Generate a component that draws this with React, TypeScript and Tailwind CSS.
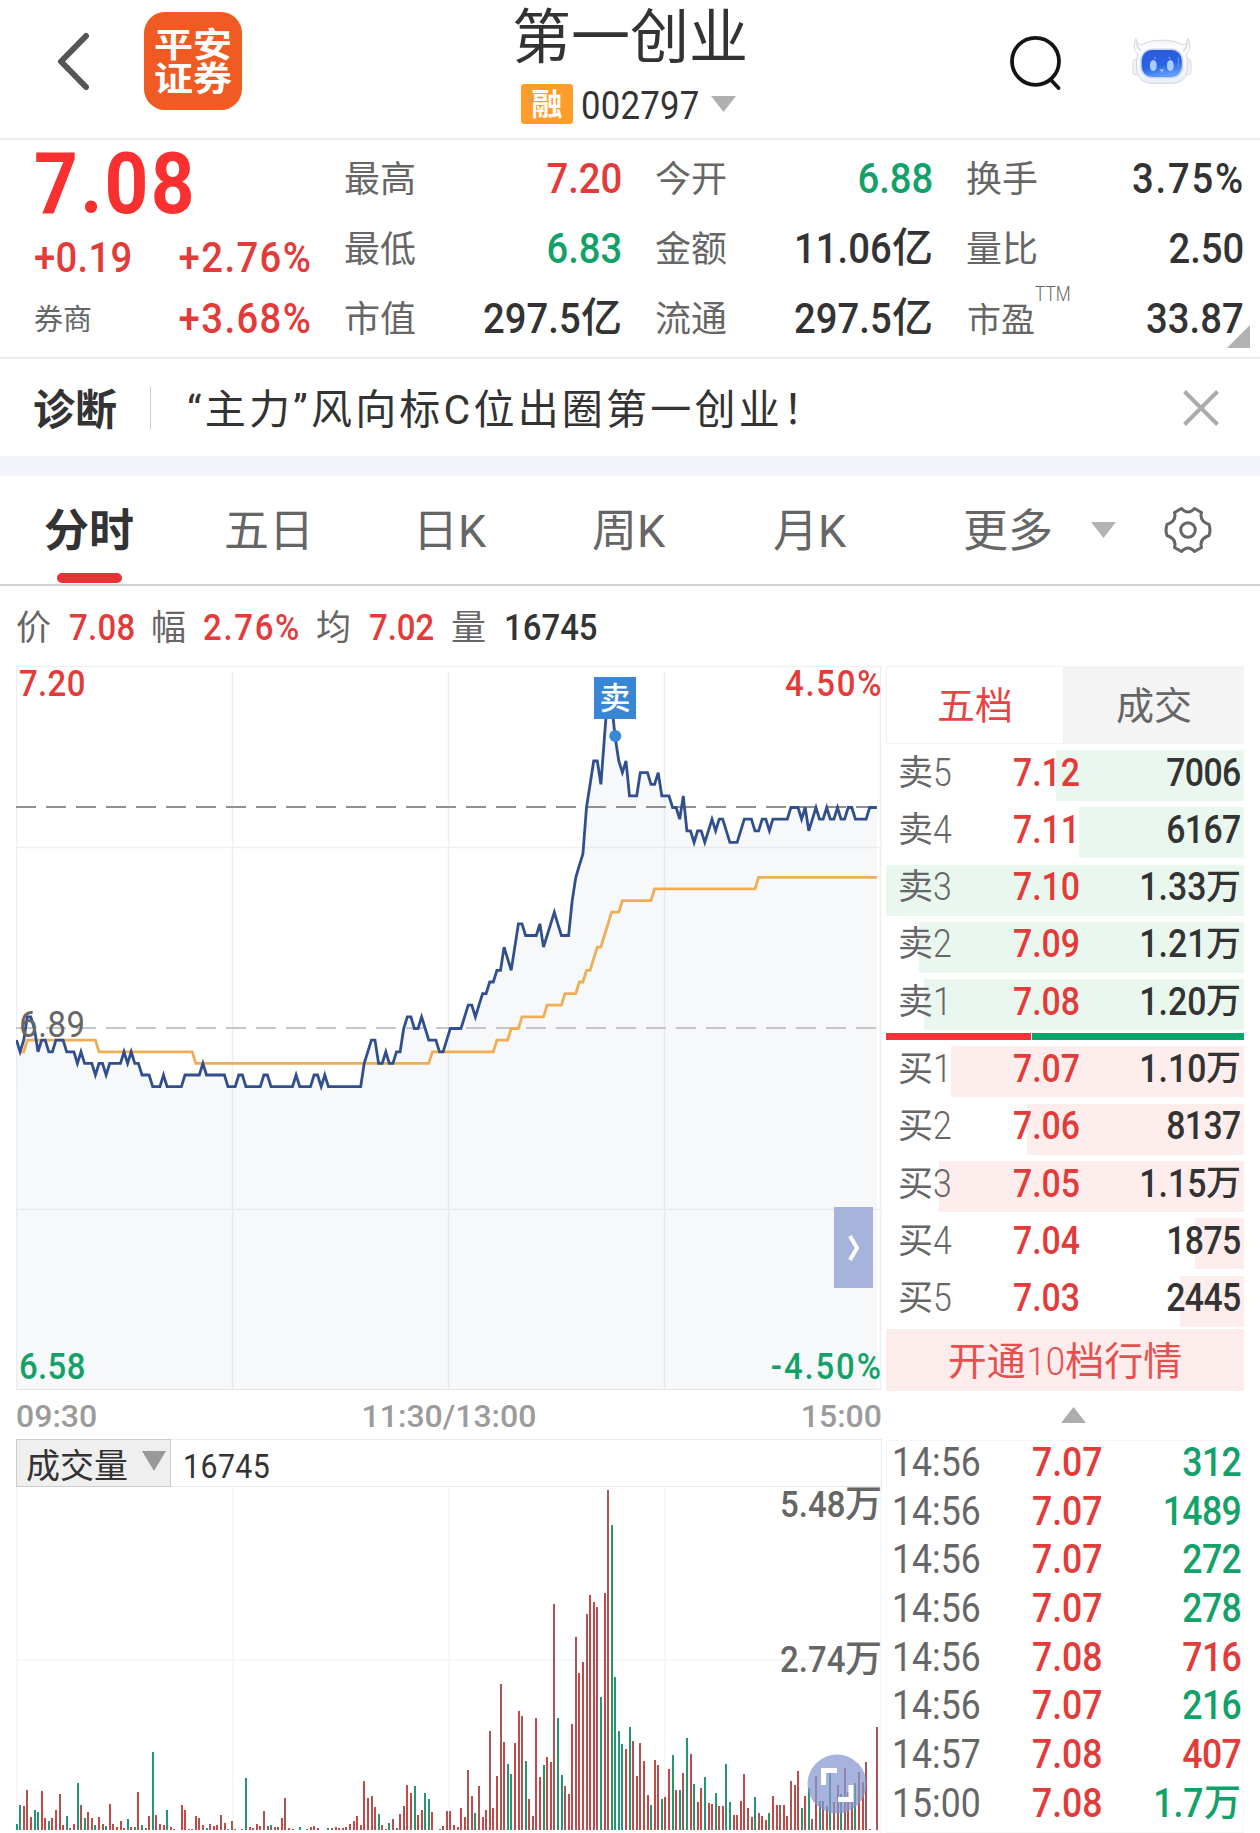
import type { ReactNode } from 'react';
import clsx from 'clsx';

const RED = 'text-[#e23b3a]';
const GREEN = 'text-[#12a168]';
const DARK = 'text-[#333333]';

// [minute of the session, price in cents]
const PRICE: [number, number][] = [
  [0, 688], [1, 687], [2, 688], [3, 690], [4, 690], [5, 689], [6, 687], [7, 688], [8, 688], [9, 687], [10, 687],
  [11, 688], [13, 688], [14, 687], [16, 687], [17, 686], [18, 687], [19, 686], [21, 686], [22, 685], [23, 686],
  [24, 686], [25, 685], [26, 686], [29, 686], [30, 687], [31, 686], [32, 687], [33, 686], [34, 686], [35, 685],
  [37, 685], [38, 684], [40, 684], [41, 685], [42, 684], [46, 684], [47, 685], [51, 685], [52, 686], [53, 685],
  [58, 685], [59, 684], [61, 684], [62, 685], [63, 685], [64, 684], [68, 684], [69, 685], [70, 685], [71, 684],
  [77, 684], [78, 685], [79, 684], [82, 684], [83, 685], [84, 685], [85, 684], [86, 685], [87, 684], [96, 684],
  [97, 686], [98, 687], [99, 688], [100, 688], [101, 686], [102, 686], [103, 687], [104, 686], [105, 686],
  [106, 687], [107, 687], [108, 689], [109, 690], [110, 690], [111, 689], [112, 689], [113, 690], [114, 689],
  [115, 688], [117, 688], [118, 687], [119, 687], [120, 688], [121, 689], [124, 689], [125, 690], [126, 691],
  [127, 691], [128, 690], [129, 691], [130, 692], [131, 692], [132, 693], [133, 693], [134, 694], [135, 694],
  [136, 696], [137, 695], [138, 694], [139, 696], [140, 698], [141, 698], [142, 697], [145, 697], [146, 698],
  [147, 696], [148, 697], [149, 698], [150, 699], [151, 698], [152, 697], [154, 697], [155, 700], [156, 702],
  [157, 703], [158, 704], [159, 708], [160, 710], [161, 712], [162, 712], [163, 710], [164, 714], [165, 718],
  [166, 717], [167, 714], [168, 712], [169, 711], [170, 712], [171, 709], [173, 709], [174, 711], [176, 711],
  [177, 710], [178, 710], [179, 711], [180, 709], [182, 709], [183, 708], [184, 708], [185, 707], [186, 709],
  [187, 706], [188, 706], [189, 705], [190, 706], [191, 706], [192, 705], [193, 706], [194, 707], [195, 706],
  [196, 707], [197, 707], [198, 706], [199, 705], [201, 705], [202, 706], [203, 707], [205, 707], [206, 706],
  [207, 706], [208, 707], [209, 707], [210, 706], [211, 707], [215, 707], [216, 708], [218, 708], [219, 707],
  [220, 708], [221, 706], [222, 707], [223, 708], [224, 707], [225, 707], [226, 708], [227, 707], [228, 707],
  [229, 708], [230, 707], [231, 707], [232, 708], [233, 708], [234, 707], [237, 707], [238, 708], [240, 708],
];

const AVERAGE: [number, number][] = [
  [1, 687], [2, 687], [3, 688], [22, 688], [23, 687], [49, 687], [50, 686], [115, 686], [116, 687], [133, 687],
  [134, 688], [137, 688], [138, 689], [140, 689], [141, 690], [147, 690], [148, 691], [152, 691], [153, 692],
  [156, 692], [157, 693], [158, 693], [159, 694], [160, 694], [161, 695], [162, 696], [163, 696], [164, 697],
  [165, 698], [166, 699], [168, 699], [169, 700], [177, 700], [178, 701], [206, 701], [207, 702], [240, 702],
];

// one bar per minute, negative = falling minute
const VOLUME = [
  -6, -25, 24, 40, 13, -20, -18, 39, 12, -9, 12, 20, 36, 5, -14, 2, 6, -47, 25, -12, 18, 12, -5, 13, 6, -4, 26, 6, 3, 9,
  2, -11, 3, -3, 38, -5, 2, 14, -78, 15, 6, 5, -20, 3, 1, 0, 25, 20, 1, 1, 14, 12, 5, -2, 6, 4, 5, 15, 7, -1,
  9, 1, 0, 1, -52, 3, 2, 6, 4, 19, 4, -5, 3, 3, 12, 32, 2, 1, 0, -3, 0, 1, 3, 4, 2, 0, 0, -2, 2, 3,
  2, 2, 3, 6, 9, 14, 5, 49, 32, 34, 23, -16, 5, 1, -7, 11, 2, 16, 24, 45, 37, -44, 15, 20, -37, -31, 18, 0, -1, 4,
  19, 19, 5, 3, 22, 13, 60, 34, -17, 44, 13, 20, 99, 22, 54, 146, 88, -66, -56, 87, 119, 114, -69, 31, 14, 112, 53, -65, 73, 68,
  226, -112, -55, 44, 36, 106, 193, 157, 168, 216, 235, 228, 223, -133, 237, 340, -305, -153, -99, -86, 81, -103, 89, 54, 87, 69, 35, -25, 70, 65,
  -31, 33, 61, -75, 40, -40, 57, -92, 76, -46, 28, 42, -53, 27, 26, -37, 24, 24, -66, -28, 15, 15, 29, 56, 22, 13, -33, 17, 14, 10,
  -17, 34, 25, 25, 25, 14, 49, 45, 59, -22, 34, -42, 11, 54, -29, 29, 24, -57, 28, 45, -36, 62, 38, 29, -47, 58, 48, 68, 1, 0, 103,
];

const STEP = 3.585;
const toPoints = (data: [number, number][]) =>
  data.map(([m, p]) => `${(0.5 + m * STEP).toFixed(1)},${(362.5 - (p - 689) * 11.63).toFixed(1)}`).join(' ');

const quoteColumns = [
  [
    { label: '最高', value: '7.20', color: RED },
    { label: '最低', value: '6.83', color: GREEN },
    { label: '市值', value: '297.5', unit: '亿', color: DARK },
  ],
  [
    { label: '今开', value: '6.88', color: GREEN },
    { label: '金额', value: '11.06', unit: '亿', color: DARK },
    { label: '流通', value: '297.5', unit: '亿', color: DARK },
  ],
  [
    { label: '换手', value: '3.75%', color: DARK },
    { label: '量比', value: '2.50', color: DARK },
    { label: '市盈', value: '33.87', color: DARK, ttm: true },
  ],
];

const sells = [
  { label: '卖', level: 5, price: '7.12', amount: '7006', bar: 188 },
  { label: '卖', level: 4, price: '7.11', amount: '6167', bar: 165 },
  { label: '卖', level: 3, price: '7.10', amount: '1.33', unit: '万', bar: 358 },
  { label: '卖', level: 2, price: '7.09', amount: '1.21', unit: '万', bar: 325 },
  { label: '卖', level: 1, price: '7.08', amount: '1.20', unit: '万', bar: 320 },
];

const buys = [
  { label: '买', level: 1, price: '7.07', amount: '1.10', unit: '万', bar: 293 },
  { label: '买', level: 2, price: '7.06', amount: '8137', bar: 217 },
  { label: '买', level: 3, price: '7.05', amount: '1.15', unit: '万', bar: 305 },
  { label: '买', level: 4, price: '7.04', amount: '1875', bar: 49 },
  { label: '买', level: 5, price: '7.03', amount: '2445', bar: 64 },
];

const ticks = [
  { time: '14:56', price: '7.07', amount: '312', color: GREEN },
  { time: '14:56', price: '7.07', amount: '1489', color: GREEN },
  { time: '14:56', price: '7.07', amount: '272', color: GREEN },
  { time: '14:56', price: '7.07', amount: '278', color: GREEN },
  { time: '14:56', price: '7.08', amount: '716', color: RED },
  { time: '14:56', price: '7.07', amount: '216', color: GREEN },
  { time: '14:57', price: '7.08', amount: '407', color: RED },
  { time: '15:00', price: '7.08', amount: '1.7', unit: '万', color: GREEN },
];

// Narrow figures
const Num = ({ children, className, right }: { children: ReactNode; className?: string; right?: boolean }) => (
  <span
    className={clsx(
      'inline-block scale-x-[0.89] whitespace-nowrap leading-none',
      right ? 'origin-right' : 'origin-left',
      className
    )}
  >
    {children}
  </span>
);

const Triangle = ({ className, up }: { className?: string; up?: boolean }) => (
  <svg viewBox="0 0 24 16" preserveAspectRatio="none" className={className} fill="currentColor">
    <path d={up ? 'M0 16 12 0l12 16z' : 'M0 0h24L12 16z'} />
  </svg>
);

const RobotIcon = () => (
  <svg width="60" height="50" viewBox="0 0 60 50" fill="none">
    <defs>
      <linearGradient id="face" x1="0" y1="0" x2="0.3" y2="1">
        <stop offset="0" stopColor="#2a5ad6" />
        <stop offset="0.65" stopColor="#2c62e6" />
        <stop offset="1" stopColor="#5f9bf6" />
      </linearGradient>
      <linearGradient id="shell" x1="0" y1="0" x2="0" y2="1">
        <stop offset="0" stopColor="#f1f2f5" />
        <stop offset="0.25" stopColor="#ffffff" />
        <stop offset="1" stopColor="#e9eff7" />
      </linearGradient>
    </defs>
    <rect x="1" y="22" width="7" height="16" rx="3" fill="#f4f1f3" stroke="#d6d4da" strokeWidth="0.800" />
    <rect x="52" y="22" width="7" height="16" rx="3" fill="#f4f1f3" stroke="#d6d4da" strokeWidth="0.800" />
    <path
      d="M4 1.500C4.500 5 6.500 8 10 7.500C15 4.500 22 3.200 30 3.200S45 4.500 50 7.500C53.500 8 55.500 5 56 1.500C59 7 58.500 13 54 17C55.500 21 55.800 26 55.300 33C54.500 41 49 46 41 46.300H19C11 46 5.500 41 4.700 33C4.200 26 4.500 21 6 17C1.500 13 1 7 4 1.500Z"
      fill="url(#shell)"
      stroke="#cfd2da"
      strokeWidth="0.900"
    />
    <path d="M5 5c0 4 1.500 7.500 4 9M55 5c0 4-1.500 7.500-4 9" stroke="#dcdee4" strokeWidth="2" />
    <rect x="9" y="12.300" width="41.500" height="28.300" rx="11" fill="url(#face)" stroke="#c3d6f7" strokeWidth="1.400" />
    <ellipse cx="21.300" cy="28.500" rx="3.400" ry="5.600" fill="#a9cdfb" />
    <ellipse cx="38.300" cy="28.500" rx="3.400" ry="5.600" fill="#a9cdfb" />
    <path d="M22 21h2M36.500 21h2M28.700 32.800h2.600L30 35z" stroke="#8fbcfa" strokeWidth="1.200" fill="#9cc6ff" />
    <path d="M46.500 20v10" stroke="#5e8df2" strokeWidth="1.200" />
  </svg>
);

const GearIcon = () => (
  <svg width="48" height="48" viewBox="0 0 48 48" fill="none" stroke="#666" strokeWidth="3" strokeLinejoin="round">
    <path d="M17.500 2.500Q24 9.500 30.500 2.500L37.500 6.500Q35 15 45 18.500Q47 24 45 29.500Q35 33 37.500 41.500L30.500 45.500Q24 38.500 17.500 45.500L10.500 41.500Q13 33 3 29.500Q1 24 3 18.500Q13 15 10.500 6.500Z" />
    <circle cx="24" cy="24" r="7.300" />
  </svg>
);

const Header = () => (
  <header className="flex h-[140px] shrink-0 border-b-2 border-[#ececec]">
    <div className="flex w-[515px] items-start pl-[55px]">
      <svg width="36" height="60" viewBox="0 0 36 60" className="mt-8" fill="none" stroke="#555" strokeWidth="6" strokeLinecap="round" strokeLinejoin="round">
        <path d="M31 4 6 29.500 31 55" />
      </svg>
      <div className="ml-[53px] mt-3 flex size-[98px] items-center justify-center rounded-[21px] bg-[#f05b24] font-bold text-white">
        <p className="mt-[3px] scale-y-[0.86] whitespace-pre text-[39px] leading-[40px]">{'平安\n证券'}</p>
      </div>
    </div>
    <div className="flex w-[232px] flex-col items-start">
      <h1 className="-ml-[3px] mt-2 whitespace-nowrap text-[59px] leading-none">第一创业</h1>
      <div className="ml-[6px] mt-[17px] flex h-10 items-center">
        <span className="flex h-10 w-[52px] items-center justify-center rounded-[3px] bg-[#ff9c2a] text-[31px] font-bold leading-none text-white">
          融
        </span>
        <Num className="ml-2 mt-[5px] w-[130px] text-[39px] tracking-[0.300px]">002797</Num>
        <Triangle className="-mt-px h-4 w-[25px] text-[#b0b0b0]" />
      </div>
    </div>
    <div className="flex flex-1 items-start justify-between pl-[262px] pr-[68px] pt-[34px]">
      <svg width="54" height="58" viewBox="0 0 54 58" fill="none" stroke="#141414" strokeWidth="3.800" strokeLinecap="round">
        <circle cx="26.500" cy="27.300" r="23.500" />
        <path d="m42 46 7.500 8" />
      </svg>
      <div className="mt-[3px]">
        <RobotIcon />
      </div>
    </div>
  </header>
);

const Quote = () => (
  <section className="relative flex h-[219px] shrink-0 border-b-2 border-[#ececec]">
    <div className="w-[345px] shrink-0 pl-[34px]">
      <div className="mt-[1px] flex h-[86px] items-center">
        <Num className="text-[86px] font-bold tracking-[2.500px] text-[#f8302f]">7.08</Num>
      </div>
      <div className={clsx('-mt-px flex h-[62px] w-[276px] items-center justify-between text-[43px] font-medium', RED)}>
        <Num className="tracking-[0.300px]">+0.19</Num>
        <Num right className="-mr-[2px] tracking-[1.600px]">+2.76%</Num>
      </div>
      <div className="flex h-[60px] w-[276px] items-center justify-between">
        <span className="mt-1 text-[29px] leading-none text-[#666]">券商</span>
        <Num right className={clsx('-mr-[2px] text-[43px] font-medium tracking-[1.600px]', RED)}>+3.68%</Num>
      </div>
    </div>
    {quoteColumns.map((column, i) => (
      <div key={i} className="mr-[34px] flex w-[277px] shrink-0 flex-col pt-[3px]">
        {column.map((item) => (
          <div key={item.label} className="flex h-[70px] items-center justify-between">
            <span
              className={clsx(
                'relative -ml-px mt-[3px] whitespace-nowrap leading-none text-[#666]',
                'ttm' in item ? 'pl-px text-[34px]' : 'text-[36px]'
              )}
            >
              {item.label}
              {'ttm' in item && (
                <span className="absolute -top-[19px] left-full origin-left scale-x-[0.86] text-[20px] font-light leading-none">TTM</span>
              )}
            </span>
            <span className={clsx('flex items-center whitespace-nowrap text-[43px] font-medium leading-none', item.color)}>
              <Num right className={item.value.endsWith('%') ? '-mr-px tracking-[2px]' : undefined}>
                {item.value}
              </Num>
              {'unit' in item && <span className="text-[41px] leading-none">{item.unit}</span>}
            </span>
          </div>
        ))}
      </div>
    ))}
    <svg viewBox="0 0 23 23" className="absolute bottom-[9px] right-[10px] size-[23px] fill-[#b2b2b2]">
      <path d="M23 0v23H0z" />
    </svg>
  </section>
);

const Diagnosis = () => (
  <section className="flex h-[97px] shrink-0 items-center pl-[33px] pr-[41px]">
    <span className="mt-[6px] text-[42px] font-bold leading-none">诊断</span>
    <span className="ml-[33px] h-[42px] w-px bg-[#ccc]" />
    <p className="ml-[36px] mt-[6px] flex-1 whitespace-nowrap text-[41px] leading-none tracking-[3.200px]">
      “主力”风向标C位出圈第一创业！
    </p>
    <svg width="36" height="36" viewBox="0 0 36 36" stroke="#acacac" strokeWidth="4">
      <path d="m1.500 1.500 33 33M34.500 1.500l-33 33" />
    </svg>
  </section>
);

const Tabs = () => (
  <nav className="flex h-[110px] shrink-0 items-center border-b-2 border-[#d2d2d2] text-[45px] leading-none text-[#666]">
    <div className="relative flex h-full w-[224px] items-center pl-[44px] pt-[3px] font-bold text-[#333]">
      分时
      <span className="absolute bottom-px left-[57px] h-[10px] w-[65px] rounded-full bg-[#e93233]" />
    </div>
    <span className="mt-[3px] w-[189px]">五日</span>
    <span className="mt-[3px] w-[179px]">日K</span>
    <span className="mt-[3px] w-[181px]">周K</span>
    <span className="mt-[3px] w-[190px]">月K</span>
    <span className="mt-[3px] w-[128px]">更多</span>
    <Triangle className="h-4 w-[25px] text-[#b3b3b3]" />
    <div className="ml-[48px]">
      <GearIcon />
    </div>
  </nav>
);

const Summary = () => (
  <div className="flex h-[80px] shrink-0 items-center pl-4 pt-[3px] text-[35px] leading-none text-[#666]">
    <span className="mt-px w-[53px]">价</span>
    <Num className={clsx('w-[82px] text-[37px] font-medium tracking-[0.300px]', RED)}>7.08</Num>
    <span className="mt-px w-[52px]">幅</span>
    <Num className={clsx('w-[113px] text-[37px] font-medium tracking-[1.900px]', RED)}>2.76%</Num>
    <span className="mt-px w-[53px]">均</span>
    <Num className={clsx('w-[82px] text-[37px] font-medium', RED)}>7.02</Num>
    <span className="mt-px w-[53px]">量</span>
    <Num className="text-[37px] font-medium text-[#333]">16745</Num>
  </div>
);

const PriceChart = () => {
  const line = toPoints(PRICE);
  return (
    <div className="relative h-[724px] w-[866px] text-[37px] font-medium leading-none">
      <svg width="866" height="724" viewBox="0 0 866 724" fill="none" className="block">
        <polygon points={`0.5,724 ${line} 861,724`} fill="#f6f8fa" />
        <path d="M0 .5h866M0 181.500h866M0 543.500h866M0 723.500h866M.5 0v724M216.500 6v718M432.500 6v718M648.500 6v718M864.500 0v724" stroke="#90909a" strokeOpacity="0.140" strokeWidth="1.500" />
        <path d="M0 362h862" stroke="#c5c5c7" strokeWidth="2" strokeDasharray="20 10" />
        <path d="M0 141h862" stroke="#8f8f8f" strokeWidth="2" strokeDasharray="20 10" />
        <polyline points={toPoints(AVERAGE)} stroke="#efae54" strokeWidth="2.800" />
        <polyline points={line} stroke="#304f8c" strokeWidth="2.800" />
        <circle cx="599.300" cy="70" r="6" fill="#3988d2" />
      </svg>
      <Num className={clsx('absolute -top-px left-[3px] tracking-[0.400px]', RED)}>7.20</Num>
      <Num right className={clsx('absolute -right-px -top-px tracking-[1.900px]', RED)}>4.50%</Num>
      <Num className="absolute left-[3px] top-[340px] font-normal tracking-[0.700px] text-[#666]">6.89</Num>
      <Num className={clsx('absolute bottom-[5px] left-[3px] tracking-[0.400px]', GREEN)}>6.58</Num>
      <Num right className={clsx('absolute -right-px bottom-[5px] tracking-[2.100px]', GREEN)}>-4.50%</Num>
      <span className="absolute left-[578px] top-[11px] flex size-[42px] items-center justify-center bg-[#3986d4] pt-px text-[31px] text-white">
        卖
      </span>
      <button className="absolute left-[818px] top-[541px] flex h-[81px] w-[39px] items-center justify-center bg-[#a6b4dc]">
        <svg width="12" height="26" viewBox="0 0 12 26" fill="none" stroke="#fff" strokeWidth="4">
          <path d="m2 1 7 12-7 12" />
        </svg>
      </button>
    </div>
  );
};

const VolumeChart = () => (
  <div className="relative h-[346px] w-[866px] text-[37px] font-medium leading-none text-[#666]">
    <svg width="866" height="346" viewBox="0 0 866 346" className="block">
      <path d="M0 173h866M1 0v346M217 0v346M433 0v346M649 0v346M865 0v346" stroke="#f5f5f5" strokeWidth="1.500" />
      {VOLUME.map((v, i) =>
        v === 0 ? null : (
          <rect
            key={i}
            x={Math.round(i * STEP - 0.4)}
            y={343 - Math.abs(v)}
            width="2"
            height={Math.abs(v)}
            fill={v > 0 ? (i % 3 ? '#c54846' : '#a85553') : '#259670'}
          />
        )
      )}
    </svg>
    <span className="absolute -top-px right-0 flex items-center">
      <Num right>5.48</Num>万
    </span>
    <span className="absolute right-0 top-[154px] flex items-center">
      <Num right>2.74</Num>万
    </span>
    <svg viewBox="0 0 60 60" className="absolute left-[791px] top-[267px] size-[60px]" fill="none" stroke="#fff" strokeWidth="5">
      <circle cx="30" cy="30" r="29.500" fill="#8497d0" fillOpacity="0.720" stroke="none" />
      <path d="M16.500 31V16.500H30M44 31v14.500H31" />
    </svg>
  </div>
);

type Level = { label: string; level: number; price: string; amount: string; unit?: string; bar: number };

const LevelRow = ({ row, tone }: { row: Level; tone: string }) => (
  <div className="relative mb-[6.300px] h-[51px]">
    <span className={clsx('absolute inset-y-0 right-0', tone)} style={{ width: row.bar }} />
    <div className="relative flex h-[45px] items-center pl-3 pr-[3px] leading-none">
      <span className="flex w-[115px] items-center text-[35px] text-[#666]">
        <span className="mt-px">{row.label}</span>
        <Num className="text-[38px] font-light">{row.level}</Num>
      </span>
      <Num className={clsx('text-[38px] font-medium', RED)}>{row.price}</Num>
      <span className="flex flex-1 items-center justify-end text-[38px] font-medium">
        <Num right className={row.unit ? undefined : 'tracking-[-0.700px]'}>
          {row.amount}
        </Num>
        {row.unit && <span className="text-[35px]">{row.unit}</span>}
      </span>
    </div>
  </div>
);

const OrderBook = () => (
  <div className="w-[358px]">
    <div className="mb-[6px] flex h-[78px] text-[38px] leading-none">
      <div className="flex w-[178px] items-center justify-center border border-[#f2f2f2] pt-[2px] text-[#e84343]">五档</div>
      <div className="flex flex-1 items-center justify-center bg-[#f4f4f4] pt-[2px] text-[#666]">成交</div>
    </div>
    {sells.map((row) => (
      <LevelRow key={row.level} row={row} tone="bg-[#eaf7ef]" />
    ))}
    <div className="-mt-[3px] mb-[6px] flex h-[7px] gap-px">
      <span className="w-[145px] bg-[#f53336]" />
      <span className="flex-1 bg-[#0aa56b]" />
    </div>
    {buys.map((row) => (
      <LevelRow key={row.level} row={row} tone="bg-[#fdeeed]" />
    ))}
    <button className="-mt-1 flex h-[62px] w-full items-center justify-center bg-[#fdecec] pt-[6px] text-[39px] leading-none text-[#e5504f]">
      开通<span className="mx-[-2px] scale-x-[0.89] font-light">10</span>档行情
    </button>
    <div className="flex h-[49px] justify-center pl-4 pt-4">
      <Triangle up className="h-4 w-[25px] text-[#adadad]" />
    </div>
    <div className="h-[393px] border border-[#f6f6f6] pl-[5px] pr-[2px]">
      {ticks.map((tick, i) => (
        <div key={i} className="flex h-[48.700px] items-center pb-[5px] text-[40px] font-medium leading-none">
          <Num className="w-[140px] font-normal text-[#666]">{tick.time}</Num>
          <Num className={RED}>{tick.price}</Num>
          <span className={clsx('flex flex-1 items-center justify-end', tick.color)}>
            <Num right className={tick.unit ? undefined : 'tracking-[-0.700px]'}>
              {tick.amount}
            </Num>
            {tick.unit && <span className="text-[37px]">{tick.unit}</span>}
          </span>
        </div>
      ))}
    </div>
  </div>
);

export default function App() {
  return (
    <main className="flex h-[1833px] w-[1260px] flex-col overflow-hidden bg-white font-['Roboto','Noto_Sans_CJK_SC',sans-serif] text-[#333]">
      <Header />
      <Quote />
      <Diagnosis />
      <div className="h-5 shrink-0 bg-[#f3f4f9]" />
      <Tabs />
      <Summary />
      <div className="flex gap-1 pl-4">
        <div className="w-[866px] shrink-0">
          <PriceChart />
          <div className="flex h-[49px] items-center justify-between pt-[3px] text-[32px] font-medium leading-none text-[#9b9b9b]">
            <span>09:30</span>
            <span>11:30/13:00</span>
            <span>15:00</span>
          </div>
          <div className="flex h-12 items-center border border-[#ebebeb]">
            <div className="-ml-px flex h-12 w-[155px] items-center justify-between border border-[#ccc] bg-[#efefef] pl-[9px] pr-1 text-[34px] leading-none">
              <span className="mt-[6px]">成交量</span>
              <Triangle className="-mt-1 h-5 w-6 text-[#999]" />
            </div>
            <Num className="ml-3 mt-[5px] text-[34px] tracking-[0.500px]">16745</Num>
          </div>
          <VolumeChart />
        </div>
        <OrderBook />
      </div>
    </main>
  );
}
